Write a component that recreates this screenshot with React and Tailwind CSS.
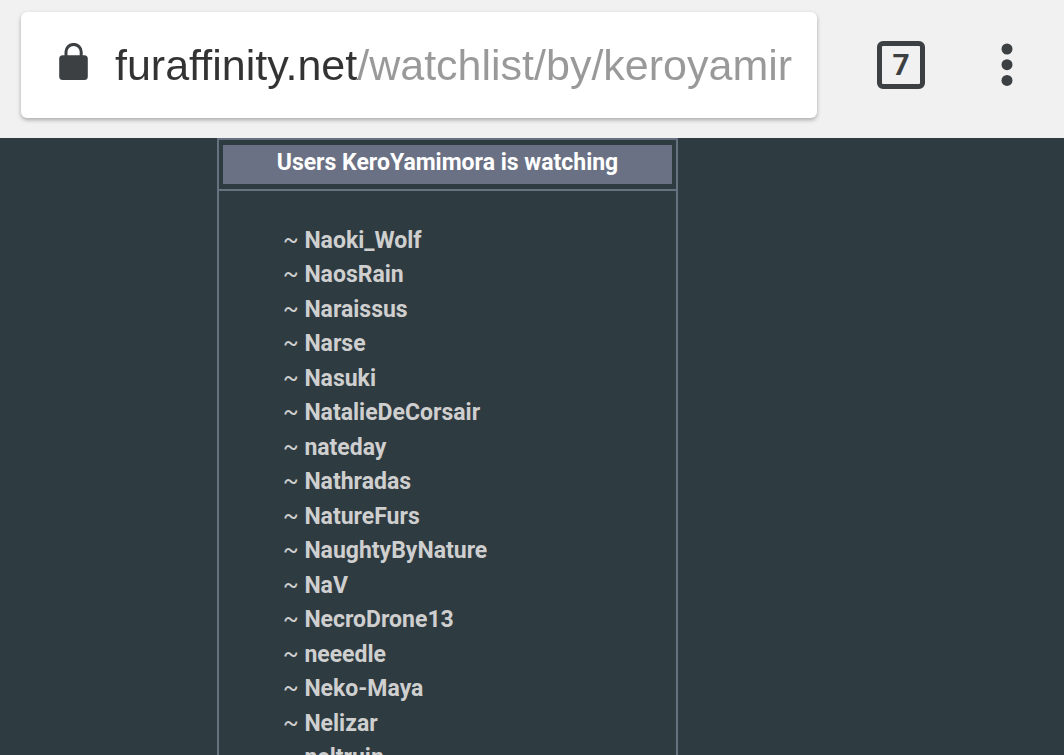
import { useState } from 'react';

const watched = [
  'Naoki_Wolf',
  'NaosRain',
  'Naraissus',
  'Narse',
  'Nasuki',
  'NatalieDeCorsair',
  'nateday',
  'Nathradas',
  'NatureFurs',
  'NaughtyByNature',
  'NaV',
  'NecroDrone13',
  'neeedle',
  'Neko-Maya',
  'Nelizar',
  'neltruin',
];

function LockIcon() {
  return (
    <svg width="30" height="44" viewBox="0 0 30 44" className="shrink-0" aria-hidden="true">
      <rect x="0.2" y="12.2" width="28.6" height="24.8" rx="3.5" fill="#3d4043" />
      <path d="M7 14V8.8a7.6 7.4 0 0 1 15.2 0v5" fill="none" stroke="#3d4043" strokeWidth="3" />
    </svg>
  );
}

function MenuIcon() {
  return (
    <svg width="12" height="44" viewBox="0 0 12 44" fill="#3d4043" aria-hidden="true">
      <circle cx="6" cy="6" r="5.5" />
      <circle cx="6" cy="21.7" r="5.5" />
      <circle cx="6" cy="37.4" r="5.5" />
    </svg>
  );
}

function Toolbar() {
  const [url, setUrl] = useState('furaffinity.net/watchlist/by/keroyamir');

  return (
    <header className="flex items-center bg-[#f1f1f1] pt-3 pb-5 pl-[21px]">
      <label className="flex h-[106px] min-w-0 flex-1 items-center gap-[26px] rounded-md bg-white pr-5 pl-[38px] shadow-[0_2px_4px_rgba(0,0,0,0.3)]">
        <LockIcon />
        {/* Host is dark, the path after it is grey */}
        <input
          type="text"
          aria-label="Address"
          value={url}
          onChange={(e) => setUrl(e.target.value)}
          className="w-full min-w-0 bg-linear-to-r from-[#333333] from-[243px] to-[#999999] to-[243px] bg-clip-text font-['Liberation_Sans',Arial,sans-serif] text-[43px] leading-[60px] text-transparent outline-none"
        />
      </label>

      <button
        type="button"
        aria-label="Tabs"
        className="mx-15 flex size-12 shrink-0 items-center justify-center rounded-md border-[5px] border-[#3d4043] text-[30px] leading-none font-bold text-[#3d4043]"
      >
        7
      </button>
      <button type="button" aria-label="Menu" className="mr-9 flex w-[43px] shrink-0 justify-center">
        <MenuIcon />
      </button>
    </header>
  );
}

export default function App() {
  return (
    <div className="flex h-screen flex-col overflow-hidden bg-[#2e3b41] font-[Roboto,sans-serif]">
      <Toolbar />

      <main className="ml-[217px] w-[461px] max-w-full border-2 border-[#687180] text-[23px] leading-normal">
        <div className="border-b-2 border-[#687180] px-1 py-[5px]">
          <h1 className="bg-[#6b7184] pt-px pb-[3px] text-center font-bold text-white">
            Users KeroYamimora is watching
          </h1>
        </div>

        <ul className="px-16 py-[33px] text-[#cfcfcf]">
          {watched.map((name) => (
            <li key={name}>
              ~{' '}
              <a href={`#${name}`} className="font-bold">
                {name}
              </a>
            </li>
          ))}
        </ul>
      </main>
    </div>
  );
}
